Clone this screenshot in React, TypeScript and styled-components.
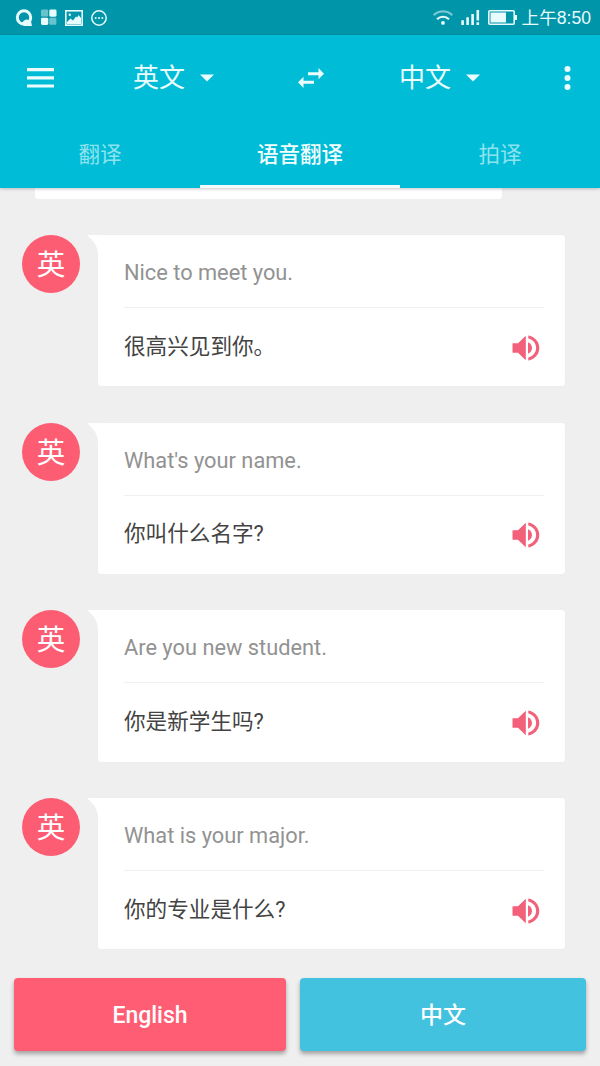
import React from "react";
import styled, { createGlobalStyle } from "styled-components";

const GlobalStyle = createGlobalStyle`
  * { box-sizing: border-box; }
  body { margin: 0; background: #efefef; font-family: Roboto, "Noto Sans CJK SC", sans-serif; }
  button { font-family: inherit; border: 0; padding: 0; background: none; color: inherit; }
  svg { display: block; flex: none; }
`;

const Screen = styled.div`
  width: 600px;
  height: 1066px;
  display: flex;
  flex-direction: column;
  overflow: hidden;
  background: #efefef;
`;

const StatusBar = styled.div`
  height: 35px;
  flex: none;
  display: flex;
  align-items: center;
  justify-content: space-between;
  padding: 0 9px 0 15px;
  background: #0095a8;
  color: #e8fbfd;
`;

const StatusGroup = styled.div<{ $gap: number }>`
  display: flex;
  align-items: center;
  gap: ${(p) => p.$gap}px;
`;

const Clock = styled.span`
  font-family: "Liberation Sans", "Noto Sans CJK SC", sans-serif;
  font-size: 17.6px;
  line-height: 24px;
  margin-left: -3px;
  white-space: nowrap;
`;

const Header = styled.header`
  height: 153px;
  flex: none;
  background: #00bcd6;
  color: #eafcfd;
  position: relative;
  box-shadow: 0 1px 3px rgba(0, 0, 0, 0.22);
`;

const Toolbar = styled.div`
  height: 85px;
  display: grid;
  grid-template-columns: 27px 1fr 26px 1fr 7px;
  align-items: center;
  padding: 0 29px 0 27px;
`;

const LanguageButton = styled.button<{ $start: number }>`
  display: flex;
  align-items: center;
  gap: 15px;
  padding: 1px 0 0 ${(p) => p.$start}px;
  font-size: 26px;
  line-height: 36px;
`;

const SwapIcon = styled.svg`
  justify-self: end;
  margin-right: -2px;
`;

const Tabs = styled.nav`
  height: 68px;
  display: grid;
  grid-template-columns: repeat(3, 1fr);
`;

const Tab = styled.button<{ $active?: boolean }>`
  font-size: 21.5px;
  line-height: 30px;
  font-weight: ${(p) => (p.$active ? 500 : 400)};
  color: ${(p) => (p.$active ? "#f4ffff" : "#8fe3ee")};
  border-bottom: 3px solid ${(p) => (p.$active ? "#f3fbfc" : "transparent")};
  padding-top: 4px;
`;

const Conversation = styled.main`
  height: 790px;
  flex: none;
  overflow: hidden;
  padding: 0 35px 0 22px;
`;

const PreviousCard = styled.div`
  width: 467px;
  height: 10.5px;
  margin: 0 0 36.5px 13px;
  background: #fff;
  border-radius: 0 0 3px 3px;
`;

const Message = styled.article`
  display: flex;
  align-items: flex-start;
  height: 151.3px;
  margin-bottom: 36.4px;
`;

const Avatar = styled.div`
  width: 58px;
  height: 58px;
  border-radius: 50%;
  background: #fd5d73;
  color: #fff;
  font-size: 28.5px;
  line-height: 58px;
  padding-top: 2px;
  text-align: center;
`;

const Tail = styled.svg`
  margin-left: 7px;
`;

const Card = styled.div`
  width: 467px;
  height: 151.3px;
  padding: 0 21px 0 26px;
  background: #fff;
  border-radius: 0 3px 3px 3px;
  box-shadow: 0 0 1px rgba(0, 0, 0, 0.06);
`;

const Source = styled.div`
  height: 73px;
  border-bottom: 1px solid #f0f0f0;
  padding-top: 2px;
  color: #929292;
  font-size: 21.8px;
  line-height: 71px;
`;

const Translation = styled.div`
  height: 78px;
  display: flex;
  align-items: center;
  justify-content: space-between;
  padding: 0 4px 1px 0;
  color: #434343;
  font-size: 21.6px;
  line-height: 32px;
`;

const SpeakerIcon = styled.svg`
  margin-top: 2px;
`;

const Actions = styled.footer`
  flex: 1;
  display: grid;
  grid-template-columns: 272px 286px;
  gap: 14px;
  padding-left: 14px;
  align-items: start;
`;

const SpeakButton = styled.button<{ $color: string }>`
  height: 73px;
  border-radius: 4px;
  background: ${(p) => p.$color};
  color: #fff;
  font-size: 23px;
  font-weight: 500;
  line-height: 34px;
  padding-top: 3px;
  box-shadow: 0 3px 4px rgba(0, 0, 0, 0.32);
`;

const Caret = () => (
  <svg width="14" height="8" viewBox="0 0 14 8" fill="currentColor"><path d="M0 .5h14L7 7.5z" /></svg>
);

const Speaker = () => (
  <SpeakerIcon width="28" height="28" viewBox="0 0 28 28" fill="#f2607a">
    <path d="M.5 9.3H6L13.800 1.700v24.600L6 18.700H.5z" />
    <path d="M16 8.200c2.400 1 4 3.200 4 5.800s-1.600 4.800-4 5.800z" />
    <path d="M16.300 1.500C22.500 2.400 27.300 7.600 27.300 14s-4.800 11.600-11 12.500v-3.100c4.500-.9 7.800-4.700 7.800-9.400s-3.300-8.500-7.800-9.400z" />
  </SpeakerIcon>
);

const phrases = [
  { en: "Nice to meet you.", zh: "很高兴见到你。" },
  { en: "What's your name.", zh: "你叫什么名字?" },
  { en: "Are you new student.", zh: "你是新学生吗?" },
  { en: "What is your major.", zh: "你的专业是什么?" },
];

export default function App() {
  return (
    <Screen>
      <GlobalStyle />
      <StatusBar>
        <StatusGroup $gap={8}>
          <svg width="18" height="18" viewBox="0 0 18 18">
            <circle cx="9" cy="8.500" r="6.700" fill="none" stroke="currentColor" strokeWidth="3" />
            <path d="M6.500 14c1.500-1 2.500-3.500 5-3.500 2.200 0 2.700 1.500 4.500 2l1 4.500H9z" fill="currentColor" />
          </svg>
          <svg width="16" height="17" viewBox="0 0 17 17" fill="currentColor">
            <rect width="7.500" height="7.500" rx="1" opacity=".45" />
            <rect x="8.800" width="7.700" height="7.700" rx="1.500" />
            <rect y="8.800" width="7.700" height="7.700" rx="1.500" />
            <rect x="8.800" y="8.800" width="7.500" height="7.500" rx="1" opacity=".45" />
          </svg>
          <svg width="18" height="16" viewBox="0 0 18 16">
            <rect x=".8" y=".8" width="16.400" height="14.400" fill="none" stroke="currentColor" strokeWidth="1.600" />
            <path d="M2 12l3.500-3.500L8 10.500l3-4 1.200 1L13.500 5 16 8v6H2z" fill="currentColor" />
            <circle cx="4.800" cy="4.800" r="1.200" fill="currentColor" />
          </svg>
          <svg width="16" height="16" viewBox="0 0 16 16" fill="currentColor">
            <circle cx="8" cy="8" r="7.200" fill="none" stroke="currentColor" strokeWidth="1.500" />
            <circle cx="4.700" cy="8" r="1" /><circle cx="8" cy="8" r="1" /><circle cx="11.300" cy="8" r="1" />
          </svg>
        </StatusGroup>
        <StatusGroup $gap={8}>
          <svg width="20" height="15" viewBox="0 0 20 15" fill="none" stroke="currentColor" strokeWidth="2.200">
            <path d="M.7 5.200c5.200-5 13.400-5 18.600 0" opacity=".5" />
            <path d="M4 9.200c3.400-3.300 8.600-3.300 12 0" />
            <circle cx="10" cy="12.900" r="1.900" fill="currentColor" stroke="none" />
          </svg>
          <svg width="19" height="15" viewBox="0 0 19 15" fill="currentColor">
            <path d="M.3 10.300h2.600V15H.3zM5.300 7.300h2.600V15H5.300zM10.300 4h2.600v11h-2.600zM15.500 0h2.600v10.500h-2.600zM15.500 12.300h2.600V15h-2.600z" />
          </svg>
          <svg width="29" height="15" viewBox="0 0 29 15">
            <rect x=".8" y=".8" width="25.400" height="13.400" rx="1" fill="none" stroke="currentColor" strokeWidth="1.600" />
            <path d="M2.500 2.500H18v10H2.500zM27 5h2v5h-2z" fill="currentColor" />
          </svg>
          <Clock>上午8:50</Clock>
        </StatusGroup>
      </StatusBar>
      <Header>
        <Toolbar>
          <svg width="27" height="20" viewBox="0 0 27 20" fill="currentColor">
            <path d="M0 0h27v3.200H0zM0 8.200h27v3.200H0zM0 16.400h27v3.200H0z" />
          </svg>
          <LanguageButton $start={79}>英文<Caret /></LanguageButton>
          <SwapIcon width="26" height="20" viewBox="0 0 26 20" fill="currentColor">
            <path d="M10 4.200h10.500V0L26 5.700l-5.500 5.500V7.300H10zM16 12.700H5.500V8.800L0 14.300 5.500 20v-4.200H16z" />
          </SwapIcon>
          <LanguageButton $start={77}>中文<Caret /></LanguageButton>
          <svg width="7" height="24" viewBox="0 0 7 24" fill="currentColor">
            <circle cx="3.500" cy="3" r="3" /><circle cx="3.500" cy="12" r="3" /><circle cx="3.500" cy="21" r="3" />
          </svg>
        </Toolbar>
        <Tabs>
          <Tab>翻译</Tab>
          <Tab $active>语音翻译</Tab>
          <Tab>拍译</Tab>
        </Tabs>
      </Header>
      <Conversation>
        <PreviousCard />
        {phrases.map((p) => (
          <Message key={p.en}>
            <Avatar>英</Avatar>
            <Tail width="11" height="19" viewBox="0 0 11 19"><path d="M0 0h11v19C10.500 11 7 6 0 0z" fill="#fff" /></Tail>
            <Card>
              <Source>{p.en}</Source>
              <Translation>{p.zh}<Speaker /></Translation>
            </Card>
          </Message>
        ))}
      </Conversation>
      <Actions>
        <SpeakButton $color="#ff5d73">English</SpeakButton>
        <SpeakButton $color="#43c2df">中文</SpeakButton>
      </Actions>
    </Screen>
  );
}
